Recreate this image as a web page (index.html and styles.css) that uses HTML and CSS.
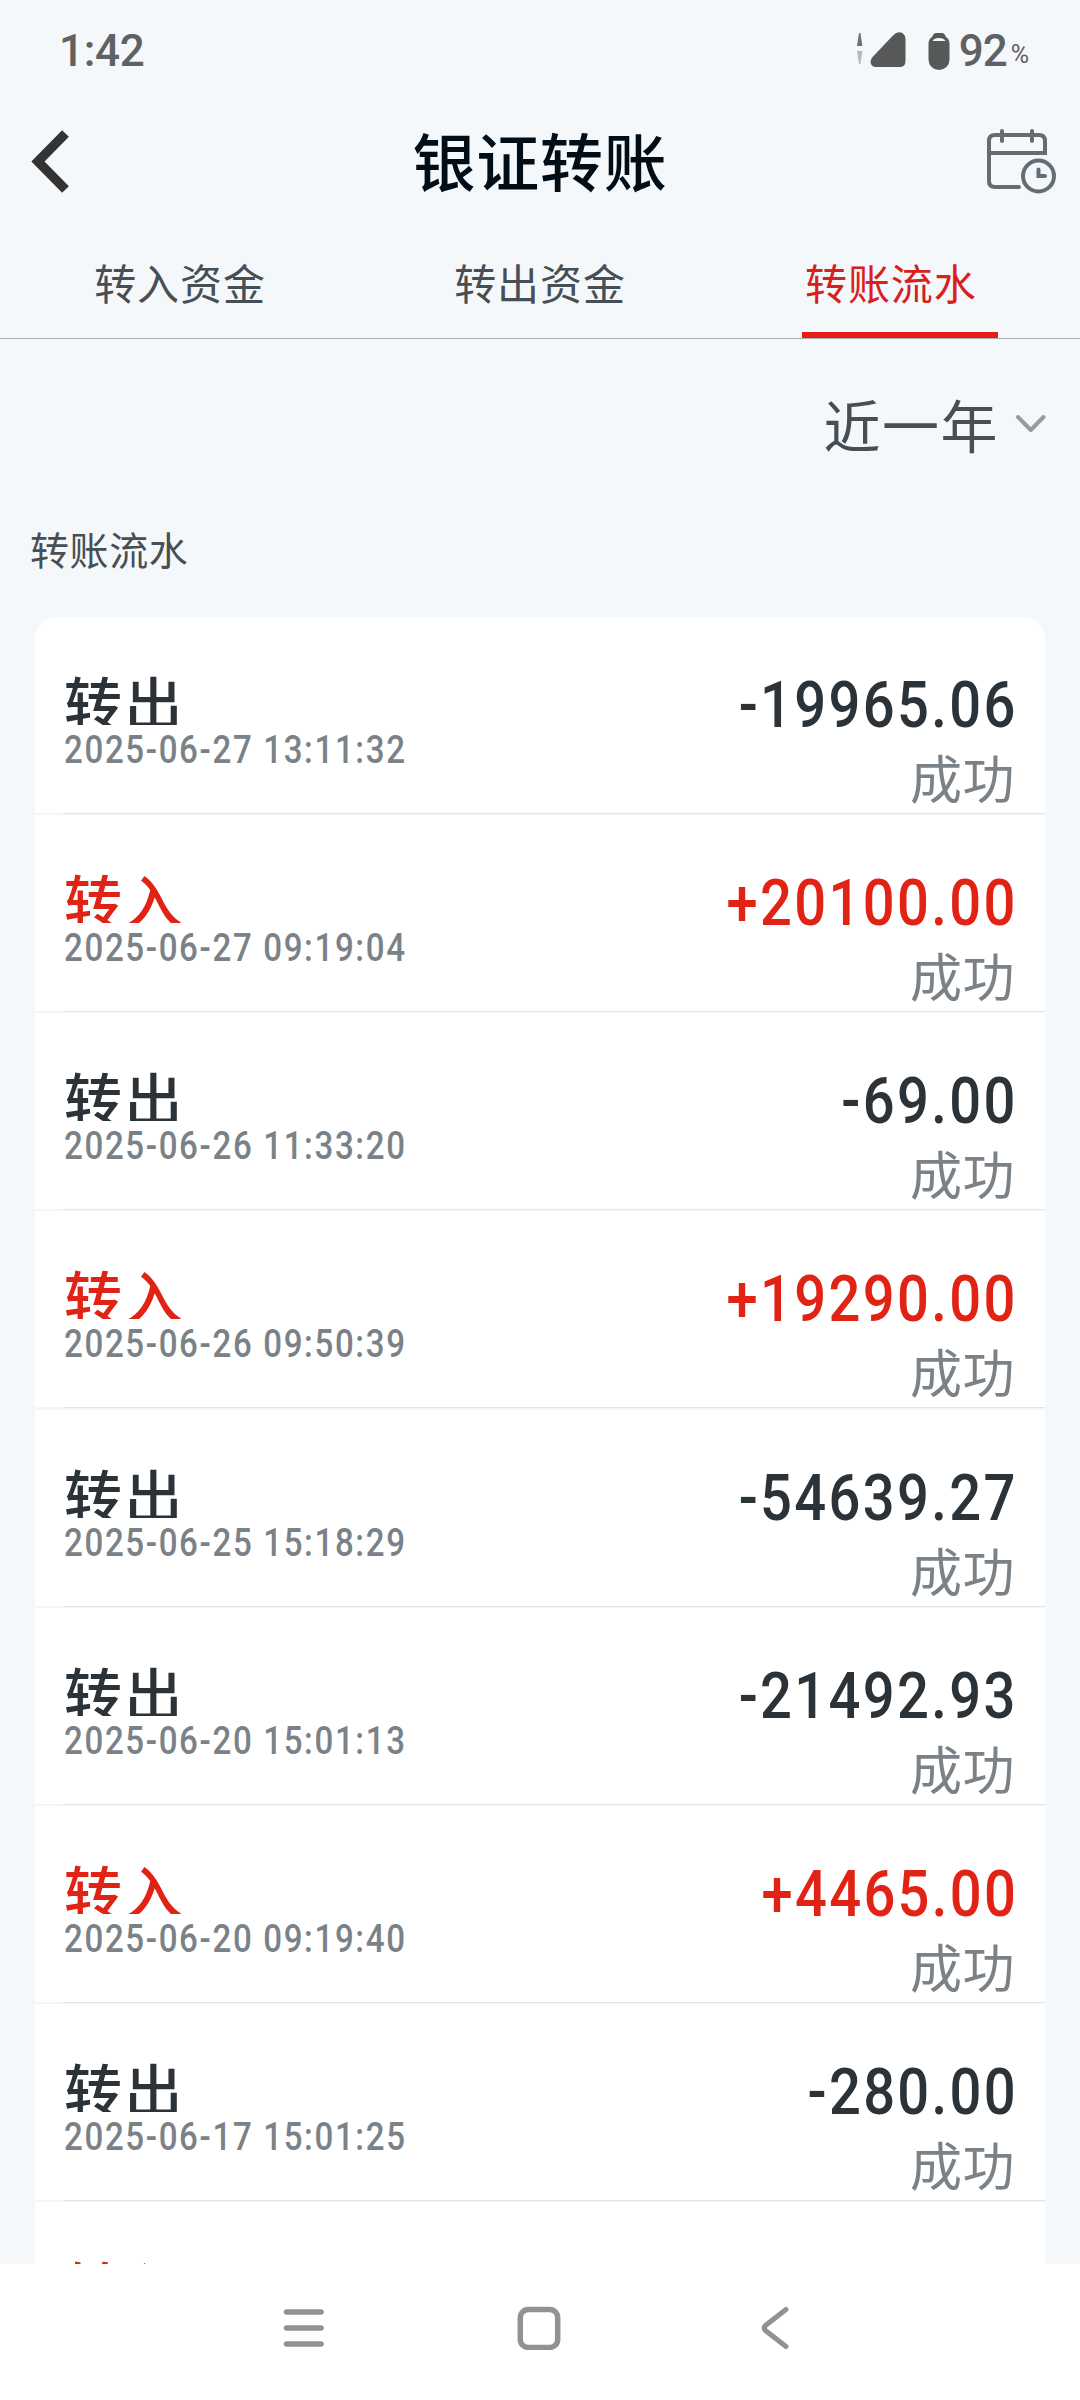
FILE: index.html
```html
<!DOCTYPE html>
<html lang="zh-CN">
<head>
<meta charset="utf-8">
<title>银证转账</title>
<link rel="stylesheet" href="styles.css">
</head>
<body>
<div class="screen">
  <div class="statusbar">
    <span class="clock">1:42</span>
    <div class="indicators">
      <svg class="signal" width="50" height="38" viewBox="0 0 50 38">
        <path d="M3 2h1.4L6.4 15H1z" fill="#6f7172"/>
        <path d="M1 20h5.4L4.4 33H3z" fill="#b7babc"/>
        <path d="M37 4.500Q42 -1 47 2.500Q49.500 4.500 49.500 8V30Q49.500 36 43.500 36H20Q15 36 14.500 31Q14.500 28 17 25.500Z" fill="#575959"/>
      </svg>
      <svg class="battery" width="22" height="38" viewBox="0 0 22 38">
        <path d="M5 3Q6 1 8 1h6q2 0 3 2l1 2q3.500 2 3.500 7v15.500a10.500 10.500 0 0 1-21 0V12q0-5 3.500-7z" fill="#575959"/>
        <path d="M4.500 9Q6 6 11 6t6.500 3z" fill="#f4f8fb"/>
      </svg>
      <span class="level">92</span><span class="percent">%</span>
    </div>
  </div>

  <header class="titlebar">
    <svg class="back" width="40" height="66" viewBox="0 0 40 66"><path d="M35.500 4.500L8 32.500L35.500 60.500" fill="none" stroke="#333" stroke-width="9.500"/></svg>
    <h1 class="title">银证转账</h1>
    <svg class="calendar" width="72" height="70" viewBox="0 0 72 70" fill="none" stroke="#646d73" stroke-width="4" stroke-linecap="round">
      <path d="M33 60H9Q3 60 3 54V14Q3 8 9 8H53Q59 8 59 14V26H3"/>
      <path d="M16 4V14M46 4V14"/>
      <circle cx="52.500" cy="49" r="15.500"/>
      <path d="M52.500 42.500V49H59" stroke-linejoin="miter"/>
    </svg>
  </header>

  <nav class="tabs">
    <div class="tab">转入资金</div>
    <div class="tab">转出资金</div>
    <div class="tab active">转账流水</div>
  </nav>

  <main class="content">
    <div class="filter">
      <span class="range">近一年</span>
      <svg width="32" height="22" viewBox="0 0 32 22"><path d="M3 4L15.800 17L28.500 4" fill="none" stroke="#939ca2" stroke-width="4" stroke-linecap="round" stroke-linejoin="round"/></svg>
    </div>
    <h2 class="section">转账流水</h2>
    <ul class="list">
      <li class="row"><div class="left"><div class="kind">转出</div><div class="date">2025-06-27 13:11:32</div></div><div class="right"><div class="amount">-19965.06</div><div class="state">成功</div></div></li>
      <li class="row in"><div class="left"><div class="kind">转入</div><div class="date">2025-06-27 09:19:04</div></div><div class="right"><div class="amount">+20100.00</div><div class="state">成功</div></div></li>
      <li class="row"><div class="left"><div class="kind">转出</div><div class="date">2025-06-26 11:33:20</div></div><div class="right"><div class="amount">-69.00</div><div class="state">成功</div></div></li>
      <li class="row in"><div class="left"><div class="kind">转入</div><div class="date">2025-06-26 09:50:39</div></div><div class="right"><div class="amount">+19290.00</div><div class="state">成功</div></div></li>
      <li class="row"><div class="left"><div class="kind">转出</div><div class="date">2025-06-25 15:18:29</div></div><div class="right"><div class="amount">-54639.27</div><div class="state">成功</div></div></li>
      <li class="row"><div class="left"><div class="kind">转出</div><div class="date">2025-06-20 15:01:13</div></div><div class="right"><div class="amount">-21492.93</div><div class="state">成功</div></div></li>
      <li class="row in"><div class="left"><div class="kind">转入</div><div class="date">2025-06-20 09:19:40</div></div><div class="right"><div class="amount">+4465.00</div><div class="state">成功</div></div></li>
      <li class="row"><div class="left"><div class="kind">转出</div><div class="date">2025-06-17 15:01:25</div></div><div class="right"><div class="amount">-280.00</div><div class="state">成功</div></div></li>
      <li class="row in"><div class="left"><div class="kind">转入</div></div></li>
    </ul>
  </main>

  <footer class="navbar">
    <svg width="42" height="44" viewBox="0 0 42 44" stroke="#929292" stroke-width="5.500" stroke-linecap="round"><path d="M3.500 6H38M3.500 22H38M3.500 38H38"/></svg>
    <svg class="home" width="44" height="44" viewBox="0 0 44 44"><rect x="3.300" y="3.500" width="37.400" height="38" rx="8" fill="none" stroke="#929292" stroke-width="5.500"/></svg>
    <svg width="30" height="44" viewBox="0 0 30 44"><path d="M26 3.500L5.500 19.500Q3 22 5.500 24.500L26 40.500" fill="none" stroke="#929292" stroke-width="5" stroke-linecap="round"/></svg>
  </footer>
</div>
</body>
</html>
```
FILE: styles.css
```css
* { box-sizing: border-box; }
body {
  margin: 0;
  background: #f4f8fb;
  font-family: Roboto, "Noto Sans CJK SC", sans-serif;
}
svg { display: block; flex: none; }
.screen {
  width: 1080px;
  height: 2400px;
  display: flex;
  flex-direction: column;
  overflow: hidden;
}
.statusbar {
  height: 102px;
  flex: none;
  padding: 0 51px 0 59px;
  display: flex;
  justify-content: space-between;
  color: #5f6163;
  font-weight: 500;
}
.clock { font-size: 44px; line-height: 102px; letter-spacing: -0.3px; }
.indicators { display: flex; padding-top: 31px; }
.battery { margin: 1px 9px 0 22px; }
.level { font-size: 44px; line-height: 40px; letter-spacing: -1px; }
.percent { font-size: 25px; line-height: 48px; margin-left: 4px; font-weight: 400; }

.titlebar {
  height: 120px;
  flex: none;
  display: flex;
  justify-content: space-between;
  padding: 0 22px 0 30px;
}
.back { margin-top: 27px; }
.calendar { margin-top: 25px; }
.title {
  margin: 0 0 0 24px;
  font-size: 63px;
  font-weight: 500;
  line-height: 126px;
  letter-spacing: 0.8px;
  color: #010e18;
}
.tabs {
  height: 117px;
  flex: none;
  display: grid;
  grid-template-columns: repeat(3, 1fr);
  grid-template-rows: 116px;
  justify-items: center;
  border-bottom: 1px solid #a9afb3;
}
.tab {
  width: 196px;
  text-align: center;
  font-size: 42px;
  letter-spacing: 0.9px;
  line-height: 128px;
  color: #474f54;
}
.active {
  border-bottom: 6px solid #e71a17;
  color: #d8201c;
  text-align: left;
  padding-left: 3px;
}
.content { flex: 1; min-height: 0; overflow: hidden; }
.filter {
  height: 180px;
  padding: 0 33px 0 0;
  display: flex;
  justify-content: flex-end;
  align-items: center;
  gap: 16px;
  color: #474f54;
}
.filter svg { margin-bottom: 10px; }
.range { font-size: 57px; line-height: 60px; letter-spacing: 1.500px; }
.section {
  margin: 0;
  padding-left: 30px;
  height: 98px;
  font-size: 39px;
  letter-spacing: 0.6px;
  font-weight: 400;
  line-height: 66px;
  color: #474f54;
}
.list {
  list-style: none;
  margin: 0 35px;
  padding: 0;
  background: #fff;
  border-radius: 22px 22px 0 0;
}
.row {
  height: 198.14px;
  padding: 55px 30px 0 29px;
  display: flex;
  justify-content: space-between;
  color: #2b3238;
  background: linear-gradient(90deg, transparent 28px, #dfe6ea 28px) 0 196px / 100% 1px no-repeat,
    linear-gradient(#f3f7f9, #f3f7f9) 0 196px / 100% 3px no-repeat;
}
.in { color: #e02314; }
.kind {
  height: 53px;
  overflow: hidden;
  font-size: 58px;
  line-height: 69px;
  letter-spacing: 2.500px;
  font-weight: 500;
}
.date {
  font-size: 38px;
  line-height: 50px;
  letter-spacing: 1.900px;
  font-weight: 500;
  color: #7a8288;
  transform: scaleX(0.87);
  transform-origin: left;
}
.right { text-align: right; }
.amount {
  margin-right: -3px;
  font-size: 64.500px;
  line-height: 66px;
  letter-spacing: 2.700px;
  font-weight: 500;
  transform: scaleX(0.87);
  transform-origin: right;
}
.state {
  margin-top: 9px;
  font-size: 52px;
  line-height: 69px;
  letter-spacing: 0.5px;
  color: #7a8288;
}
.navbar {
  height: 136px;
  flex: none;
  background: #fff;
  display: flex;
  justify-content: space-between;
  padding: 42px 290px 0 283px;
}
.home { margin-right: 7px; }
```
